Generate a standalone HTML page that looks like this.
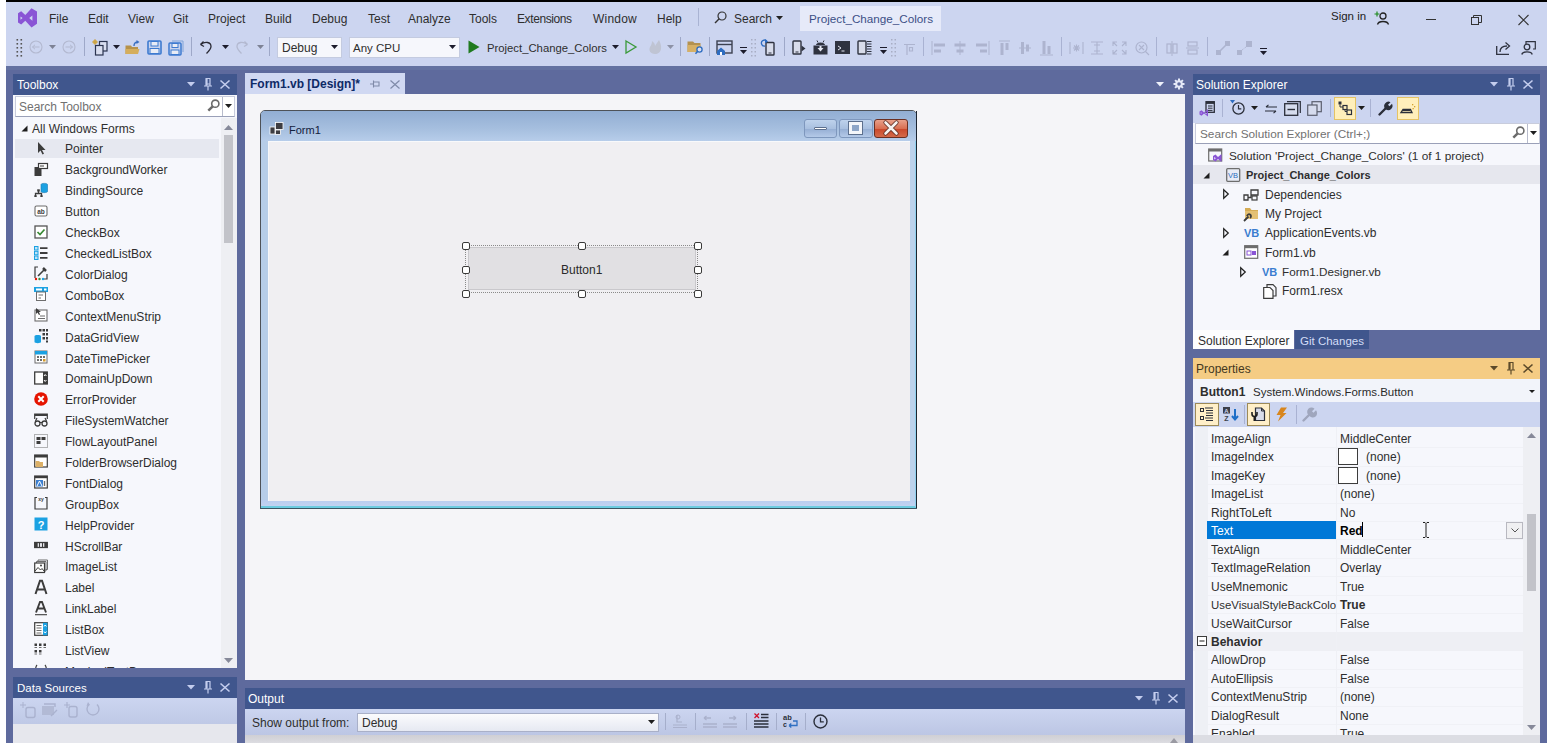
<!DOCTYPE html>
<html><head><meta charset="utf-8">
<style>
*{box-sizing:border-box;margin:0;padding:0}
html,body{width:1556px;height:743px;overflow:hidden;background:#fff}
body{position:relative;font-family:"Liberation Sans",sans-serif;font-size:12px;color:#2e2e2e}
.a{position:absolute}
.t{position:absolute;white-space:nowrap;line-height:14px}
svg{position:absolute;overflow:visible}
</style></head><body>
<!-- top black bar -->
<div class="a" style="left:6px;top:0;width:1541px;height:2px;background:#000"></div>
<!-- menu/toolbar bg -->
<div class="a" style="left:6px;top:2px;width:1541px;height:64px;background:#ccd5f0"></div>
<!-- frame -->
<div class="a" style="left:6px;top:66px;width:1541px;height:677px;background:#5e6a9d"></div>
<div class="a" style="left:6px;top:66px;width:1541px;height:4px;background:#6472a1"></div>

<!-- ===== MENU ===== -->
<svg style="left:0;top:0" width="40" height="30" viewBox="0 0 40 30"><path d="M18 13.2 L21.2 11.3 L25.3 15 L31.5 8.3 L37 11.5 V23.8 L31.5 27.6 L25.3 20.8 L21.2 24.6 L18 22.6 Z M20.5 16.5 V19.7 L22.6 18.1 Z M32.4 15.4 V20.8 L29.2 18.1 Z" fill="#8a55d5" fill-rule="evenodd"/></svg>
<div class="t" style="left:49px;top:12px">File</div>
<div class="t" style="left:88px;top:12px">Edit</div>
<div class="t" style="left:128px;top:12px">View</div>
<div class="t" style="left:173px;top:12px">Git</div>
<div class="t" style="left:208px;top:12px">Project</div>
<div class="t" style="left:265px;top:12px">Build</div>
<div class="t" style="left:312px;top:12px">Debug</div>
<div class="t" style="left:368px;top:12px">Test</div>
<div class="t" style="left:408px;top:12px">Analyze</div>
<div class="t" style="left:469px;top:12px">Tools</div>
<div class="t" style="left:517px;top:12px;letter-spacing:-0.4px">Extensions</div>
<div class="t" style="left:593px;top:12px;letter-spacing:0.2px">Window</div>
<div class="t" style="left:657px;top:12px">Help</div>
<div class="a" style="left:698px;top:8px;width:1px;height:18px;background:#a9b3d3"></div>
<svg style="left:714px;top:11px" width="13" height="13" viewBox="0 0 13 13"><circle cx="8" cy="5" r="4" fill="none" stroke="#333" stroke-width="1.2"/><path d="M5.2 7.8 L1 12" stroke="#333" stroke-width="1.4"/></svg>
<div class="t" style="left:734px;top:12px">Search</div>
<svg style="left:776px;top:16px" width="7" height="4"><path d="M0 0H7L3.5 4Z" fill="#222"/></svg>
<div class="a" style="left:800px;top:6px;width:141px;height:25px;background:#e6eaf9"></div>
<div class="t" style="left:809px;top:12px;color:#3b4f86;font-size:11.7px">Project_Change_Colors</div>
<div class="t" style="left:1331px;top:9px;color:#222;font-size:11.5px">Sign in</div>
<svg style="left:1375px;top:11px" width="14" height="14" viewBox="0 0 14 14"><path d="M2 0.5V5.5M-0.5 3H4.5" stroke="#1e8a1e" stroke-width="1.2"/><circle cx="8" cy="5" r="3" fill="none" stroke="#222" stroke-width="1.3"/><path d="M2.5 13.5C3.5 9.5 12.5 9.5 13.5 13.5" fill="none" stroke="#222" stroke-width="1.3"/></svg>
<div class="a" style="left:1426px;top:19px;width:10px;height:1px;background:#333"></div>
<svg style="left:1471px;top:15px" width="11" height="10" viewBox="0 0 11 10"><rect x="0.5" y="2.5" width="7" height="7" fill="none" stroke="#333"/><path d="M2.5 2.5V0.5H10.5V7.5H7.5" fill="none" stroke="#333"/></svg>
<svg style="left:1518px;top:15px" width="11" height="10" viewBox="0 0 11 10"><path d="M0.5 0L10.5 10M10.5 0L0.5 10" stroke="#333" stroke-width="1.1"/></svg>

<!-- ===== TOOLBAR ===== -->
<svg style="left:16px;top:38px" width="7" height="19"><g fill="#555"><rect x="0.5" y="1" width="1.6" height="1.6"/><rect x="4.5" y="1" width="1.6" height="1.6"/><rect x="0.5" y="5" width="1.6" height="1.6"/><rect x="4.5" y="5" width="1.6" height="1.6"/><rect x="0.5" y="9" width="1.6" height="1.6"/><rect x="4.5" y="9" width="1.6" height="1.6"/><rect x="0.5" y="13" width="1.6" height="1.6"/><rect x="4.5" y="13" width="1.6" height="1.6"/><rect x="0.5" y="17" width="1.6" height="1.6"/><rect x="4.5" y="17" width="1.6" height="1.6"/></g></svg>
<svg style="left:29px;top:40px" width="14" height="14"><circle cx="7" cy="7" r="6" fill="none" stroke="#b3b9d0" stroke-width="1.1"/><path d="M3.5 7H10.5M3.5 7L6 4.8M3.5 7L6 9.2" fill="none" stroke="#b3b9d0" stroke-width="1"/></svg>
<svg style="left:49px;top:45px" width="7" height="4"><path d="M0 0H7L3.5 4Z" fill="#7d8295"/></svg>
<svg style="left:62px;top:40px" width="14" height="14"><circle cx="7" cy="7" r="6" fill="none" stroke="#b3b9d0" stroke-width="1.1"/><path d="M3.5 7H10.5M10.5 7L8 4.8M10.5 7L8 9.2" fill="none" stroke="#b3b9d0" stroke-width="1"/></svg>
<div class="a" style="left:84px;top:37px;width:1px;height:19px;background:#9ea8c8"></div>
<svg style="left:92px;top:39px" width="17" height="17" viewBox="0 0 17 17"><circle cx="3" cy="3" r="2.2" fill="#d9b45a"/><path d="M3 0V6M0 3H6" stroke="#c19a3e" stroke-width="0.8"/><rect x="7.5" y="2.5" width="7.5" height="9.5" fill="#d9def0" stroke="#2b3450" stroke-width="1.2"/><rect x="3.5" y="6.5" width="7.5" height="9.5" fill="#d9def0" stroke="#2b3450" stroke-width="1.2"/></svg>
<svg style="left:113px;top:45px" width="7" height="4"><path d="M0 0H7L3.5 4Z" fill="#1c1c2c"/></svg>
<svg style="left:125px;top:40px" width="15" height="15" viewBox="0 0 15 15"><path d="M0.5 5.5H6L7 7H13V14H0.5Z" fill="#b6924a"/><path d="M0.5 9H14.5L13 14H0.5Z" fill="#d5ae5d"/><path d="M9 6C9 3.5 10.5 2 13 2" fill="none" stroke="#3a6fc0" stroke-width="1.4"/><path d="M11.5 0L14.5 2L11.5 4Z" fill="#3a6fc0"/></svg>
<svg style="left:147px;top:40px" width="15" height="15" viewBox="0 0 15 15"><rect x="1" y="1" width="13" height="13" rx="1" fill="#c9d4ee" stroke="#3d7ad0" stroke-width="1.6"/><rect x="4" y="1.5" width="7" height="4.5" fill="#e8ecf6" stroke="#3d7ad0" stroke-width="1"/><rect x="3" y="8.5" width="9" height="5" fill="#e8ecf6" stroke="#3d7ad0" stroke-width="1"/></svg>
<svg style="left:168px;top:40px" width="16" height="16" viewBox="0 0 16 16"><path d="M4 1H15V12" fill="none" stroke="#7fa3d8" stroke-width="1"/><rect x="1" y="3" width="12" height="12" rx="1" fill="#c9d4ee" stroke="#3d7ad0" stroke-width="1.5"/><rect x="4" y="3.5" width="6" height="4" fill="#e8ecf6" stroke="#3d7ad0" stroke-width="1"/><rect x="3" y="10" width="8" height="4.5" fill="#e8ecf6" stroke="#3d7ad0" stroke-width="1"/></svg>
<div class="a" style="left:191px;top:37px;width:1px;height:19px;background:#9ea8c8"></div>
<svg style="left:199px;top:40px" width="14" height="14" viewBox="0 0 14 14"><path d="M1.5 4.5L4.5 1.5M1.5 4.5L5 6.5" fill="none" stroke="#2a2a35" stroke-width="1.3"/><path d="M1.8 4.5C6 1 12 2 12 6.5C12 9 10 11 7.5 13.5" fill="none" stroke="#2a2a35" stroke-width="1.3"/></svg>
<svg style="left:222px;top:45px" width="7" height="4"><path d="M0 0H7L3.5 4Z" fill="#1c1c2c"/></svg>
<svg style="left:235px;top:40px" width="14" height="14" viewBox="0 0 14 14"><path d="M12.5 4.5L9.5 1.5M12.5 4.5L9 6.5" fill="none" stroke="#b3b9d0" stroke-width="1.3"/><path d="M12.2 4.5C8 1 2 2 2 6.5C2 9 4 11 6.5 13.5" fill="none" stroke="#b3b9d0" stroke-width="1.3"/></svg>
<svg style="left:257px;top:45px" width="7" height="4"><path d="M0 0H7L3.5 4Z" fill="#7d8295"/></svg>
<div class="a" style="left:269px;top:37px;width:1px;height:19px;background:#9ea8c8"></div>
<div class="a" style="left:277px;top:37px;width:65px;height:21px;background:#f6f7fc;border:1px solid #c4cbe0"></div>
<div class="t" style="left:282px;top:41px">Debug</div>
<svg style="left:331px;top:45px" width="7" height="4"><path d="M0 0H7L3.5 4Z" fill="#1c1c2c"/></svg>
<div class="a" style="left:349px;top:37px;width:111px;height:21px;background:#f6f7fc;border:1px solid #c4cbe0"></div>
<div class="t" style="left:353px;top:41px;font-size:11.5px">Any CPU</div>
<svg style="left:449px;top:45px" width="7" height="4"><path d="M0 0H7L3.5 4Z" fill="#1c1c2c"/></svg>
<svg style="left:468px;top:40px" width="12" height="14"><path d="M0.5 0.5L11.5 7L0.5 13.5Z" fill="#1f7a1f"/></svg>
<div class="t" style="left:487px;top:41px;font-size:11.3px">Project_Change_Colors</div>
<svg style="left:612px;top:45px" width="7" height="4"><path d="M0 0H7L3.5 4Z" fill="#1c1c2c"/></svg>
<svg style="left:625px;top:40px" width="12" height="14"><path d="M1 1L11 7L1 13Z" fill="none" stroke="#3a9a3a" stroke-width="1.3"/></svg>
<svg style="left:648px;top:39px" width="14" height="16" viewBox="0 0 14 16"><path d="M7 15C2 15 0.5 11 2 8C3 6 4 5 4 2C6 3.5 7 5 7 7C8 5.5 9 4 11 1C12.5 4 13.5 7 13 10C12.5 13 10 15 7 15Z" fill="#bfc4d3"/></svg>
<svg style="left:667px;top:45px" width="7" height="4"><path d="M0 0H7L3.5 4Z" fill="#8d92a6"/></svg>
<div class="a" style="left:680px;top:37px;width:1px;height:19px;background:#9ea8c8"></div>
<svg style="left:687px;top:40px" width="17" height="15" viewBox="0 0 17 15"><path d="M0.5 1.5H6L7.5 3H13.5V12H0.5Z" fill="#b39150"/><path d="M0.5 5H13.5V12H0.5Z" fill="#d6b066"/><circle cx="12.5" cy="9.5" r="2.6" fill="#d8def2" stroke="#2d6cc0" stroke-width="1.3"/><path d="M10.7 11.3L8.5 13.8" stroke="#2d6cc0" stroke-width="1.5"/></svg>
<div class="a" style="left:709px;top:37px;width:1px;height:19px;background:#9ea8c8"></div>
<svg style="left:716px;top:40px" width="17" height="15" viewBox="0 0 17 15"><rect x="1" y="1" width="15" height="12" fill="none" stroke="#3c4150" stroke-width="1.4"/><path d="M1 4.5H16" stroke="#3c4150" stroke-width="1.4"/><path d="M1 11L5 7.5L9 11V15H1Z" fill="#2d6cc0"/><rect x="4" y="12" width="2" height="3" fill="#fff"/></svg>
<svg style="left:740px;top:47px" width="7" height="8"><path d="M0 0H7V1H0Z M0 3H7L3.5 7Z" fill="#1c1c2c"/></svg>
<svg style="left:751px;top:38px" width="6" height="19"><g fill="#a8aec4"><rect x="0" y="1" width="1.5" height="1.5"/><rect x="3.5" y="1" width="1.5" height="1.5"/><rect x="0" y="5" width="1.5" height="1.5"/><rect x="3.5" y="5" width="1.5" height="1.5"/><rect x="0" y="9" width="1.5" height="1.5"/><rect x="3.5" y="9" width="1.5" height="1.5"/><rect x="0" y="13" width="1.5" height="1.5"/><rect x="3.5" y="13" width="1.5" height="1.5"/><rect x="0" y="17" width="1.5" height="1.5"/><rect x="3.5" y="17" width="1.5" height="1.5"/></g></svg>
<svg style="left:761px;top:39px" width="14" height="17" viewBox="0 0 14 17"><rect x="5" y="3.5" width="8" height="12.5" rx="0.8" fill="#d8dcea" stroke="#2f3340" stroke-width="1.4"/><path d="M7.5 14H10.5" stroke="#2f3340"/><path d="M6 2.5A3 3 0 1 0 4 7" fill="none" stroke="#2d6cc0" stroke-width="1.3"/><path d="M4 0L7 2.5L4 4.5Z" fill="#2d6cc0"/></svg>
<div class="a" style="left:784px;top:37px;width:1px;height:19px;background:#9ea8c8"></div>
<svg style="left:792px;top:40px" width="14" height="15" viewBox="0 0 14 15"><rect x="1" y="1" width="8" height="13" rx="0.8" fill="#d8dcea" stroke="#2f3340" stroke-width="1.4"/><path d="M3.5 12H6.5" stroke="#2f3340"/><path d="M9.5 5.5L13.5 8.5L9.5 11.5Z" fill="#2f3340"/></svg>
<svg style="left:813px;top:39px" width="15" height="16" viewBox="0 0 15 16"><path d="M3 6C3 2.5 12 2.5 12 6Z" fill="#2f3340"/><path d="M4 1.5L5 3.5M11 1.5L10 3.5" stroke="#2f3340"/><rect x="0.5" y="6.5" width="14" height="9" fill="#2f3340"/><path d="M4.5 9H10.5L7.5 12.5Z" fill="#e5e8f3"/><path d="M6.5 7V9.5H8.5V7" fill="#e5e8f3"/></svg>
<svg style="left:835px;top:41px" width="15" height="13" viewBox="0 0 15 13"><rect x="0" y="0" width="15" height="13" fill="#2f3340"/><path d="M3 5L6 7L3 9" fill="none" stroke="#e5e8f3" stroke-width="1"/><path d="M6.5 10H9.5" stroke="#e5e8f3"/></svg>
<svg style="left:857px;top:40px" width="15" height="15" viewBox="0 0 15 15"><rect x="1" y="1" width="8" height="13" rx="0.8" fill="#d8dcea" stroke="#2f3340" stroke-width="1.4"/><path d="M10 1.5H14.5M10 4H14.5M10 6.5H14.5M10 9H14.5M10 11.5H14.5M10 14H14.5" stroke="#2f3340" stroke-width="1"/></svg>
<svg style="left:880px;top:47px" width="7" height="8"><path d="M0 0H7V1H0Z M0 3H7L3.5 7Z" fill="#1c1c2c"/></svg>
<svg style="left:891px;top:38px" width="6" height="19"><g fill="#a8aec4"><rect x="0" y="1" width="1.5" height="1.5"/><rect x="3.5" y="1" width="1.5" height="1.5"/><rect x="0" y="5" width="1.5" height="1.5"/><rect x="3.5" y="5" width="1.5" height="1.5"/><rect x="0" y="9" width="1.5" height="1.5"/><rect x="3.5" y="9" width="1.5" height="1.5"/><rect x="0" y="13" width="1.5" height="1.5"/><rect x="3.5" y="13" width="1.5" height="1.5"/><rect x="0" y="17" width="1.5" height="1.5"/><rect x="3.5" y="17" width="1.5" height="1.5"/></g></svg>

<svg style="left:904px;top:41px" width="11" height="15" viewBox="0 0 11 15"><path d="M0 3.5H11M3 3.5V14M5.5 6.5H8.5V10H5.5Z" fill="none" stroke="#adb4cf" stroke-width="1.2"/></svg>
<div class="a" style="left:923px;top:37px;width:1px;height:19px;background:#a9b2d2"></div>
<svg style="left:931px;top:41px" width="15" height="14" viewBox="0 0 15 14"><path d="M1 0V14" stroke="#adb4cf"/><rect x="3" y="2.5" width="11" height="3" fill="#adb4cf"/><rect x="3" y="8.5" width="7" height="3" fill="#adb4cf"/></svg>
<svg style="left:954px;top:41px" width="12" height="14" viewBox="0 0 12 14"><path d="M6 0V14" stroke="#adb4cf"/><rect x="0.5" y="2.5" width="11" height="3" fill="#adb4cf"/><rect x="2.5" y="8.5" width="7" height="3" fill="#adb4cf"/></svg>
<svg style="left:975px;top:41px" width="15" height="14" viewBox="0 0 15 14"><path d="M14 0V14" stroke="#adb4cf"/><rect x="1" y="2.5" width="11" height="3" fill="#adb4cf"/><rect x="5" y="8.5" width="7" height="3" fill="#adb4cf"/></svg>
<svg style="left:999px;top:40px" width="11" height="16" viewBox="0 0 11 16"><path d="M0 1H11" stroke="#adb4cf"/><rect x="1.5" y="3" width="3" height="12" fill="#adb4cf"/><rect x="6.5" y="3" width="3" height="7" fill="#adb4cf"/></svg>
<svg style="left:1019px;top:41px" width="12" height="14" viewBox="0 0 12 14"><path d="M0 7H12" stroke="#adb4cf"/><rect x="2" y="1" width="3" height="12" fill="#adb4cf"/><rect x="7" y="3.5" width="3" height="7" fill="#adb4cf"/></svg>
<svg style="left:1040px;top:40px" width="13" height="16" viewBox="0 0 13 16"><path d="M0 15H13" stroke="#adb4cf"/><rect x="2.5" y="1" width="3" height="13" fill="#adb4cf"/><rect x="7.5" y="6" width="3" height="8" fill="#adb4cf"/></svg>
<div class="a" style="left:1061px;top:37px;width:1px;height:19px;background:#a9b2d2"></div>
<svg style="left:1069px;top:41px" width="15" height="14" viewBox="0 0 15 14"><path d="M1 1V13M14 1V13M4 7H11M7.5 3.5V10.5M5 4.5L10 9.5M10 4.5L5 9.5" stroke="#adb4cf" stroke-width="1.1"/></svg>
<svg style="left:1090px;top:41px" width="14" height="14" viewBox="0 0 14 14"><path d="M1 1H13M1 13H13M7 1V13M4 4H10M4 10H10" stroke="#adb4cf" stroke-width="1.1"/></svg>
<svg style="left:1112px;top:41px" width="15" height="14" viewBox="0 0 15 14"><path d="M1 5V1H5M10 1H14V5M14 9V13H10M5 13H1V9M1 1L5 5M14 1L10 5M14 13L10 9M1 13L5 9" fill="none" stroke="#adb4cf" stroke-width="1.1"/></svg>
<svg style="left:1135px;top:41px" width="15" height="15" viewBox="0 0 15 15"><circle cx="6.5" cy="6.5" r="5.5" fill="none" stroke="#adb4cf" stroke-width="1.2"/><path d="M10.5 10.5L14 14M4 4L9 9M9 4L4 9" stroke="#adb4cf" stroke-width="1.1"/></svg>
<div class="a" style="left:1156px;top:37px;width:1px;height:19px;background:#a9b2d2"></div>
<svg style="left:1166px;top:41px" width="12" height="15" viewBox="0 0 12 15"><path d="M6 0V15" stroke="#adb4cf"/><rect x="1" y="3" width="4" height="9" fill="none" stroke="#adb4cf" stroke-width="1.2"/><rect x="7" y="3" width="4" height="9" fill="none" stroke="#adb4cf" stroke-width="1.2"/></svg>
<svg style="left:1186px;top:41px" width="13" height="14" viewBox="0 0 13 14"><path d="M0 7H13" stroke="#adb4cf"/><rect x="2" y="1" width="9" height="4" fill="none" stroke="#adb4cf" stroke-width="1.2"/><rect x="2" y="9" width="9" height="4" fill="none" stroke="#adb4cf" stroke-width="1.2"/></svg>
<div class="a" style="left:1207px;top:37px;width:1px;height:19px;background:#a9b2d2"></div>
<svg style="left:1216px;top:41px" width="14" height="14" viewBox="0 0 14 14"><rect x="0" y="9" width="5" height="5" fill="#adb4cf"/><rect x="9" y="0" width="5" height="5" fill="#adb4cf"/><path d="M4 10L10 4" stroke="#adb4cf" stroke-width="1.6"/></svg>
<svg style="left:1237px;top:41px" width="15" height="14" viewBox="0 0 15 14"><rect x="0" y="9" width="5" height="5" fill="#adb4cf"/><rect x="9" y="0" width="6" height="6" fill="#adb4cf"/><path d="M5 9L9 6" stroke="#adb4cf" stroke-width="1" stroke-dasharray="1 1"/></svg>
<svg style="left:1260px;top:48px" width="7" height="8"><path d="M0 0H7V1H0Z M0 3H7L3.5 7Z" fill="#1c1c2c"/></svg>
<svg style="left:1496px;top:41px" width="15" height="14" viewBox="0 0 15 14"><path d="M0.7 5V13.3H13" fill="none" stroke="#2f3340" stroke-width="1.3"/><path d="M4 11C4 7 7 5 11 5" fill="none" stroke="#2f3340" stroke-width="1.3"/><path d="M9.5 1.5L13.5 5L9.5 8.5" fill="none" stroke="#2f3340" stroke-width="1.3"/></svg>
<svg style="left:1521px;top:41px" width="15" height="14" viewBox="0 0 15 14"><path d="M5 3V0.7H14.3V8H12" fill="none" stroke="#2f3340" stroke-width="1.2"/><circle cx="6" cy="6" r="2.8" fill="#ccd5f0" stroke="#2f3340" stroke-width="1.3"/><path d="M0.8 13.5C1.5 10 10.5 10 11.2 13.5" fill="none" stroke="#2f3340" stroke-width="1.3"/></svg>
<!-- TOOLBOX -->
<div class="a" style="left:13px;top:74px;width:224px;height:21px;background:#40568d"></div>
<div class="a" style="left:13px;top:95px;width:224px;height:573px;background:#f6f7fc"></div>

<!--TBSTART--><div class="t" style="left:17px;top:78px;color:#fff">Toolbox</div><svg style="left:187px;top:82px" width="8" height="5"><path d="M0 0H8L4 4.5Z" fill="#c4cdee"/></svg><svg style="left:204px;top:78px" width="8" height="13" viewBox="0 0 8 13"><path d="M1.5 0.5H6.5M2 0.5V8M6 0.5V8M2 6H6M0 8H8M4 8V12.5" fill="none" stroke="#c4cdee" stroke-width="1.2"/><rect x="2" y="0.5" width="1.6" height="7" fill="#c4cdee"/></svg><svg style="left:220px;top:80px" width="10" height="9"><path d="M0.5 0.5L9.5 8.5M9.5 0.5L0.5 8.5" stroke="#c4cdee" stroke-width="1.6"/></svg><div class="a" style="left:13px;top:95px;width:224px;height:573px;overflow:hidden"><div class="a" style="left:-13px;top:-95px;width:1556px;height:743px"><div class="a" style="left:15px;top:96px;width:220px;height:21px;background:#fff;border:1px solid #c8ccdc;border-bottom-color:#9aa0b8"></div>
<div class="t" style="left:19px;top:100px;color:#717171">Search Toolbox</div>
<svg style="left:207px;top:99px" width="13" height="13" viewBox="0 0 13 13"><circle cx="8.3" cy="4.7" r="3.6" fill="none" stroke="#6b6b6b" stroke-width="1.6"/><path d="M5.7 7.3L1.3 11.7" stroke="#6b6b6b" stroke-width="2.5"/></svg>
<div class="a" style="left:222px;top:97px;width:1px;height:19px;background:#b8bccc"></div>
<svg style="left:225px;top:104px" width="7" height="4"><path d="M0 0H7L3.5 4Z" fill="#1e1e1e"/></svg>
<svg style="left:21px;top:125px" width="7" height="7"><path d="M6.5 0.5V6.5H0.5Z" fill="#1e1e1e"/></svg>
<div class="t" style="left:32px;top:122px">All Windows Forms</div>
<div class="a" style="left:15px;top:139px;width:204px;height:19px;background:#e6e8f0"></div>
<svg style="left:34px;top:141px" width="14" height="14" viewBox="0 0 14 14"><path d="M4 1V12L6.5 9.5L8.5 13.5L10 12.8L8 9H11.5Z" fill="#3c3c3c"/></svg>
<div class="t" style="left:65px;top:142px">Pointer</div>
<svg style="left:34px;top:162px" width="14" height="14" viewBox="0 0 14 14"><rect x="0.5" y="5" width="7" height="9" fill="#3c3c3c"/><rect x="4.5" y="1.5" width="9" height="5" fill="#fff" stroke="#3c3c3c" stroke-width="1.2"/><path d="M6 4H10" stroke="#3c3c3c"/></svg>
<div class="t" style="left:65px;top:163px">BackgroundWorker</div>
<svg style="left:34px;top:183px" width="14" height="14" viewBox="0 0 14 14"><path d="M7 1.5C7 0 13.5 0 13.5 1.5V8.5C13.5 10 7 10 7 8.5Z" fill="#1ba1e2" stroke="#1a78b0" stroke-width="0.6"/><path d="M1.5 13V10.5H7.5V13M4.5 8V10.5" fill="none" stroke="#3c3c3c" stroke-width="1.3"/><rect x="3.2" y="6.3" width="2.6" height="2.2" fill="#3c3c3c"/><rect x="0.3" y="12.3" width="2.4" height="1.7" fill="#3c3c3c"/><rect x="6.3" y="12.3" width="2.4" height="1.7" fill="#3c3c3c"/></svg>
<div class="t" style="left:65px;top:184px">BindingSource</div>
<svg style="left:34px;top:204px" width="14" height="14" viewBox="0 0 14 14"><rect x="1" y="2" width="12" height="10" rx="1.5" fill="#fff" stroke="#6d6d6d" stroke-width="1.1"/><text x="7" y="9.5" font-size="6.5" font-family="Liberation Sans" font-weight="bold" text-anchor="middle" fill="#3c3c3c">ab</text></svg>
<div class="t" style="left:65px;top:205px">Button</div>
<svg style="left:34px;top:225px" width="14" height="14" viewBox="0 0 14 14"><rect x="1" y="1" width="12" height="12" fill="#fff" stroke="#555" stroke-width="1.3"/><path d="M3.5 7L6 9.5L10.5 4.5" fill="none" stroke="#388a34" stroke-width="1.7"/></svg>
<div class="t" style="left:65px;top:226px">CheckBox</div>
<svg style="left:34px;top:246px" width="14" height="14" viewBox="0 0 14 14"><rect x="0.5" y="0.5" width="3.5" height="3.5" fill="#bfe3f7" stroke="#1ba1e2"/><rect x="0.5" y="5.3" width="3.5" height="3.5" fill="#bfe3f7" stroke="#1ba1e2"/><rect x="0.5" y="10" width="3.5" height="3.5" fill="#bfe3f7" stroke="#1ba1e2"/><path d="M6 2.2H13.5M6 7H13.5M6 11.8H13.5" stroke="#3c3c3c" stroke-width="1.8"/></svg>
<div class="t" style="left:65px;top:247px">CheckedListBox</div>
<svg style="left:34px;top:266px" width="14" height="14" viewBox="0 0 14 14"><path d="M4 1H1V12M10 13H13V8" fill="none" stroke="#3c3c3c" stroke-width="1.2"/><path d="M4 10L10 4" stroke="#3c3c3c" stroke-width="1.6"/><path d="M9 2L12 5" stroke="#3c3c3c" stroke-width="2.5"/><circle cx="2" cy="13" r="1.2" fill="#e51400"/><circle cx="5.5" cy="13" r="1.2" fill="#388a34"/><circle cx="9" cy="13" r="1.2" fill="#1ba1e2"/></svg>
<div class="t" style="left:65px;top:268px">ColorDialog</div>
<svg style="left:34px;top:287px" width="14" height="14" viewBox="0 0 14 14"><rect x="0" y="0" width="14" height="5" fill="#1ba1e2"/><rect x="2" y="1.5" width="6" height="2" fill="#fff"/><rect x="10" y="1.5" width="2.5" height="2" fill="#fff"/><rect x="2.5" y="5" width="9" height="8.5" fill="#fff" stroke="#6d6d6d"/><path d="M4.5 8H9M4.5 11H7" stroke="#6d6d6d"/></svg>
<div class="t" style="left:65px;top:289px">ComboBox</div>
<svg style="left:34px;top:308px" width="14" height="14" viewBox="0 0 14 14"><rect x="1" y="2" width="12" height="11" fill="#fff" stroke="#6d6d6d" stroke-width="1.1"/><path d="M2 0L2 6L3.5 4.5L5 7L6 6.5L5 4H7Z" fill="#3c3c3c"/><path d="M6 8H11M4 10.5H11" stroke="#6d6d6d"/></svg>
<div class="t" style="left:65px;top:310px">ContextMenuStrip</div>
<svg style="left:34px;top:329px" width="14" height="14" viewBox="0 0 14 14"><path d="M0.5 7C0.5 5.5 7 5.5 7 7V13C7 14.5 0.5 14.5 0.5 13Z" fill="#1ba1e2"/><g fill="#3c3c3c"><rect x="5" y="0" width="2.5" height="2.5"/><rect x="8.5" y="0" width="2.5" height="2.5"/><rect x="12" y="0" width="2" height="2.5"/><rect x="8.5" y="4" width="2.5" height="2.5"/><rect x="12" y="4" width="2" height="2.5"/><rect x="8.5" y="8" width="2.5" height="2.5"/><rect x="12" y="8" width="2" height="2.5"/><rect x="12" y="11.5" width="2" height="2"/></g></svg>
<div class="t" style="left:65px;top:331px">DataGridView</div>
<svg style="left:34px;top:350px" width="14" height="14" viewBox="0 0 14 14"><rect x="1" y="1" width="12" height="12" fill="#fff" stroke="#6d6d6d"/><rect x="1" y="1" width="12" height="3.5" fill="#1ba1e2"/><g fill="#6d6d6d"><rect x="3" y="6" width="2" height="2"/><rect x="6" y="6" width="2" height="2"/><rect x="9" y="6" width="2" height="2"/><rect x="3" y="9" width="2" height="2"/><rect x="6" y="9" width="2" height="2"/></g><rect x="9" y="9" width="2.5" height="2.5" fill="#d49a2a"/></svg>
<div class="t" style="left:65px;top:352px">DateTimePicker</div>
<svg style="left:34px;top:371px" width="14" height="14" viewBox="0 0 14 14"><rect x="0.7" y="1" width="12.6" height="12" fill="#fff" stroke="#3c3c3c" stroke-width="1.3"/><rect x="9" y="1" width="4.5" height="12" fill="#3c3c3c"/><path d="M10 5L11.2 3.5L12.4 5M10 9L11.2 10.5L12.4 9" stroke="#fff" fill="none"/></svg>
<div class="t" style="left:65px;top:372px">DomainUpDown</div>
<svg style="left:34px;top:392px" width="14" height="14" viewBox="0 0 14 14"><circle cx="7" cy="7" r="6.8" fill="#e51400"/><path d="M4.3 4.3L9.7 9.7M9.7 4.3L4.3 9.7" stroke="#fff" stroke-width="2"/></svg>
<div class="t" style="left:65px;top:393px">ErrorProvider</div>
<svg style="left:34px;top:413px" width="14" height="14" viewBox="0 0 14 14"><path d="M0.7 6V1H13.3V6" fill="none" stroke="#3c3c3c" stroke-width="1.2"/><rect x="0.7" y="1" width="12.6" height="2" fill="#3c3c3c"/><circle cx="3.5" cy="10.5" r="2.5" fill="none" stroke="#3c3c3c" stroke-width="1.3"/><circle cx="10.5" cy="10.5" r="2.5" fill="none" stroke="#3c3c3c" stroke-width="1.3"/><path d="M6 9.5H8M1.5 8L3 5M12.5 8L11 5" stroke="#3c3c3c" stroke-width="1.2"/></svg>
<div class="t" style="left:65px;top:414px">FileSystemWatcher</div>
<svg style="left:34px;top:434px" width="14" height="14" viewBox="0 0 14 14"><rect x="0.5" y="0.5" width="13" height="13" fill="none" stroke="#6d6d6d" stroke-dasharray="1 1"/><rect x="2.5" y="3" width="4" height="3" fill="#3c3c3c"/><rect x="7.5" y="3" width="4" height="3" fill="#3c3c3c"/><rect x="2.5" y="7" width="4" height="3" fill="#3c3c3c"/></svg>
<div class="t" style="left:65px;top:435px">FlowLayoutPanel</div>
<svg style="left:34px;top:454px" width="14" height="14" viewBox="0 0 14 14"><rect x="0.7" y="1" width="12.6" height="12" fill="#fff" stroke="#3c3c3c" stroke-width="1.2"/><rect x="0.7" y="1" width="12.6" height="2.5" fill="#3c3c3c"/><path d="M1.5 7H5L6 8H9V13H1.5Z" fill="#dcb067"/></svg>
<div class="t" style="left:65px;top:456px">FolderBrowserDialog</div>
<svg style="left:34px;top:475px" width="14" height="14" viewBox="0 0 14 14"><rect x="0.7" y="1" width="12.6" height="12" fill="#fff" stroke="#3c3c3c" stroke-width="1.2"/><rect x="0.7" y="1" width="12.6" height="2.2" fill="#3c3c3c"/><rect x="2" y="5" width="7" height="6.5" fill="#3c7fd0"/><path d="M3 11L5.5 6L8 11" fill="none" stroke="#fff" stroke-width="1"/><path d="M10.5 6V11" stroke="#6d6d6d" stroke-width="1.4"/></svg>
<div class="t" style="left:65px;top:477px">FontDialog</div>
<svg style="left:34px;top:496px" width="14" height="14" viewBox="0 0 14 14"><path d="M3 1.5H1V13H13V1.5H11" fill="none" stroke="#3c3c3c" stroke-width="1.2"/><text x="7" y="5" font-size="5" font-family="Liberation Sans" font-weight="bold" text-anchor="middle" fill="#3c3c3c">xy</text></svg>
<div class="t" style="left:65px;top:498px">GroupBox</div>
<svg style="left:34px;top:517px" width="14" height="14" viewBox="0 0 14 14"><rect x="0.5" y="0.5" width="13" height="13" fill="#1ba1e2"/><text x="7" y="11.5" font-size="11" font-family="Liberation Sans" font-weight="bold" text-anchor="middle" fill="#fff">?</text></svg>
<div class="t" style="left:65px;top:519px">HelpProvider</div>
<svg style="left:34px;top:538px" width="14" height="14" viewBox="0 0 14 14"><rect x="0.7" y="4.5" width="12.6" height="5" fill="none" stroke="#3c3c3c" stroke-width="1.3"/><rect x="0.7" y="4.5" width="3" height="5" fill="#3c3c3c"/><rect x="10.3" y="4.5" width="3" height="5" fill="#3c3c3c"/><path d="M5.5 4.5V9.5M8.5 4.5V9.5" stroke="#3c3c3c" stroke-width="1.2"/></svg>
<div class="t" style="left:65px;top:540px">HScrollBar</div>
<svg style="left:34px;top:559px" width="14" height="14" viewBox="0 0 14 14"><path d="M4 3V1H13.5V10.5H11.5M2.5 4.5V2.5H12V12H10" fill="none" stroke="#6d6d6d" stroke-width="1"/><rect x="0.7" y="4" width="9.8" height="9.5" fill="#fff" stroke="#3c3c3c" stroke-width="1.2"/><path d="M1 12L4 8.5L6.5 11L8 9.5L10 12" fill="none" stroke="#3c3c3c"/><circle cx="7" cy="6.5" r="1" fill="#3c3c3c"/></svg>
<div class="t" style="left:65px;top:560px">ImageList</div>
<svg style="left:34px;top:580px" width="14" height="14" viewBox="0 0 14 14"><path d="M1.5 14L6 0.8H8L12.5 14M3.5 9.5H10.5" fill="none" stroke="#3c3c3c" stroke-width="2"/></svg>
<div class="t" style="left:65px;top:581px">Label</div>
<svg style="left:34px;top:601px" width="14" height="14" viewBox="0 0 14 14"><path d="M2 11.5L6 1H8L12 11.5M3.8 7.5H10.2" fill="none" stroke="#3c3c3c" stroke-width="1.9"/><path d="M1 13.7H13" stroke="#3c3c3c" stroke-width="1.1"/></svg>
<div class="t" style="left:65px;top:602px">LinkLabel</div>
<svg style="left:34px;top:622px" width="14" height="14" viewBox="0 0 14 14"><rect x="0.7" y="0.7" width="12.6" height="12.6" fill="#fff" stroke="#3c3c3c" stroke-width="1.2"/><rect x="9" y="0.7" width="4.5" height="12.6" fill="#1ba1e2"/><path d="M2.5 3.5H7.5M2.5 6H7.5M2.5 8.5H7.5M2.5 11H7.5" stroke="#6d6d6d" stroke-width="1.2"/><path d="M10 4.5L11.2 3L12.4 4.5M10 9.5L11.2 11L12.4 9.5" stroke="#fff" fill="none"/></svg>
<div class="t" style="left:65px;top:623px">ListBox</div>
<svg style="left:34px;top:643px" width="14" height="14" viewBox="0 0 14 14"><g fill="#3c3c3c"><rect x="0.5" y="0.5" width="2.5" height="2.5"/><rect x="5" y="0.5" width="2.5" height="2.5"/><rect x="9.5" y="0.5" width="2.5" height="2.5"/><rect x="0.5" y="7" width="2.5" height="2.5"/><rect x="5" y="7" width="2.5" height="2.5"/></g><g fill="#6d6d6d"><rect x="0.5" y="4" width="2.5" height="1"/><rect x="5" y="4" width="2.5" height="1"/><rect x="9.5" y="4" width="2.5" height="1"/><rect x="0.5" y="10.5" width="2.5" height="1"/><rect x="5" y="10.5" width="2.5" height="1"/></g></svg>
<div class="t" style="left:65px;top:644px">ListView</div>
<svg style="left:34px;top:664px" width="14" height="14" viewBox="0 0 14 14"><path d="M3 1C1 3 1 11 3 13M11 1C13 3 13 11 11 13" fill="none" stroke="#3c3c3c" stroke-width="1.2"/></svg>
<div class="t" style="left:65px;top:665px">MaskedTextBox</div>
<div class="a" style="left:221px;top:118px;width:16px;height:550px;background:#eeeff3"></div>
<svg style="left:224px;top:125px" width="9" height="5"><path d="M0 5H9L4.5 0Z" fill="#868999"/></svg>
<div class="a" style="left:224px;top:135px;width:9px;height:108px;background:#c2c3c9"></div>
<svg style="left:224px;top:658px" width="9" height="5"><path d="M0 0H9L4.5 5Z" fill="#868999"/></svg></div></div><!--TBEND-->
<!-- DATA SOURCES -->
<div class="a" style="left:13px;top:677px;width:224px;height:21px;background:#40568d"></div>
<div class="a" style="left:13px;top:698px;width:224px;height:26px;background:#ccd5f0"></div>
<div class="a" style="left:13px;top:724px;width:224px;height:19px;background:#e6e7ed"></div>

<!-- DOC TAB + DESIGNER -->
<div class="a" style="left:245px;top:73px;width:160px;height:21px;background:#d0d8f2"></div>
<div class="a" style="left:245px;top:94px;width:940px;height:586px;background:#f5f5f8"></div>

<!-- OUTPUT -->
<div class="a" style="left:245px;top:688px;width:940px;height:21px;background:#40568d"></div>
<div class="a" style="left:245px;top:709px;width:940px;height:26px;background:linear-gradient(#ccd5f0,#bcc6e4)"></div>
<div class="a" style="left:245px;top:735px;width:940px;height:8px;background:linear-gradient(#cfcfd4,#dcdce1)"></div>

<!--CENTERSTART-->
<!-- Data Sources -->
<div class="t" style="left:17px;top:681px;color:#fff;font-size:11.5px">Data Sources</div>
<svg style="left:187px;top:685px" width="8" height="5"><path d="M0 0H8L4 4.5Z" fill="#c4cdee"/></svg>
<svg style="left:204px;top:681px" width="8" height="13" viewBox="0 0 8 13"><path d="M1.5 0.5H6.5M2 0.5V8M6 0.5V8M0 8H8M4 8V12.5" fill="none" stroke="#c4cdee" stroke-width="1.2"/><rect x="2" y="0.5" width="1.6" height="7" fill="#c4cdee"/></svg>
<svg style="left:220px;top:683px" width="10" height="9"><path d="M0.5 0.5L9.5 8.5M9.5 0.5L0.5 8.5" stroke="#c4cdee" stroke-width="1.6"/></svg>
<div class="a" style="left:13px;top:698px;width:224px;height:26px;background:linear-gradient(#ccd5f0,#bfc9e6)"></div>
<svg style="left:20px;top:702px" width="16" height="16" viewBox="0 0 16 16"><path d="M3 0V6M0 3H6" stroke="#aab2cf" stroke-width="1"/><rect x="6" y="5.5" width="9" height="10" rx="2" fill="none" stroke="#aab2cf" stroke-width="1.4"/></svg>
<svg style="left:41px;top:703px" width="17" height="15" viewBox="0 0 17 15"><rect x="1" y="3" width="12" height="9" fill="#b2bad5"/><path d="M3 1H14V4M10 13L16 7" stroke="#aab2cf" stroke-width="1.4" fill="none"/></svg>
<svg style="left:64px;top:702px" width="14" height="16" viewBox="0 0 14 16"><path d="M3 0V6M0 3H6" stroke="#aab2cf" stroke-width="1.2"/><rect x="5" y="4.5" width="8" height="10.5" rx="2" fill="none" stroke="#aab2cf" stroke-width="1.4"/></svg>
<svg style="left:85px;top:702px" width="16" height="16" viewBox="0 0 16 16"><path d="M4 2.5A6 6 0 1 0 12 2.5" fill="none" stroke="#aab2cf" stroke-width="1.4"/><path d="M3 0L5 3L1.5 4Z" fill="#aab2cf"/></svg>

<!-- Doc tab -->
<div class="t" style="left:250px;top:77px;color:#0e2a66;font-weight:bold">Form1.vb [Design]*</div>
<svg style="left:370px;top:80px" width="10" height="8" viewBox="0 0 10 8"><path d="M0 4H3.5M3.5 0.5V7.5M3.5 2H9M3.5 6H9M9 1.5V6.5" fill="none" stroke="#7f8aa8" stroke-width="1.1"/></svg>
<svg style="left:390px;top:80px" width="10" height="9"><path d="M0.5 0.5L9.5 8.5M9.5 0.5L0.5 8.5" stroke="#7f8aa8" stroke-width="1.2"/></svg>
<svg style="left:1156px;top:82px" width="8" height="5"><path d="M0 0H8L4 4.5Z" fill="#eef1fb"/></svg>
<svg style="left:1173px;top:78px" width="12" height="12" viewBox="0 0 12 12"><g fill="#e6eaf8"><circle cx="6" cy="6" r="3.8"/><rect x="5" y="0.5" width="2" height="11"/><rect x="0.5" y="5" width="11" height="2"/><rect x="5" y="0.5" width="2" height="11" transform="rotate(45 6 6)"/><rect x="5" y="0.5" width="2" height="11" transform="rotate(-45 6 6)"/></g><circle cx="6" cy="6" r="1.8" fill="#5e6a9d"/></svg>

<!-- Form window -->
<div class="a" style="left:260px;top:110px;width:657px;height:399px;border:1px solid #4e5258;border-radius:5px 5px 0 0;background:linear-gradient(90deg,#b6cde8,#bcd2ec)"></div>
<div class="a" style="left:261px;top:111px;width:655px;height:30px;border-radius:4px 4px 0 0;background:linear-gradient(#92aed3,#a6bfdf 60%,#b7cdea)"></div>
<div class="a" style="left:261px;top:500px;width:655px;height:7px;background:linear-gradient(#b9cdef,#c3d3f2)"></div>
<div class="a" style="left:261px;top:506px;width:655px;height:2px;background:#6ccbe0"></div>
<div class="a" style="left:916px;top:111px;width:1px;height:398px;background:#1c2430"></div>
<div class="a" style="left:915px;top:141px;width:1px;height:366px;background:#8fd0ee"></div>
<div class="a" style="left:909px;top:141px;width:1px;height:360px;background:#f7f5f2"></div>
<div class="a" style="left:260px;top:508px;width:657px;height:1px;background:#3b5563"></div>
<div class="a" style="left:268px;top:141px;width:642px;height:360px;background:#f0eff2;border-left:1px solid #f6f7f9;border-top:1px solid #f8f9fb"></div>
<svg style="left:270px;top:122px" width="14" height="13" viewBox="0 0 14 13"><rect x="0" y="5" width="5" height="7" fill="#3d3d42" stroke="#fff" stroke-width="0.8"/><rect x="5.5" y="0.5" width="7.5" height="7" fill="#3d3d42" stroke="#fff" stroke-width="0.8"/><rect x="5.5" y="8" width="5" height="4.5" fill="#3d3d42" stroke="#fff" stroke-width="0.8"/></svg>
<div class="t" style="left:289px;top:123px;font-size:11px;color:#13213d">Form1</div>
<!-- caption buttons -->
<div class="a" style="left:804px;top:119px;width:33px;height:19px;border:1px solid #7e97bd;border-radius:3px;background:linear-gradient(#bed2ec,#a9c0e0 50%,#94add3 51%,#b4c9e8)"></div>
<div class="a" style="left:814px;top:127px;width:13px;height:3px;background:#fff;border:1px solid #5d708e;border-radius:1px"></div>
<div class="a" style="left:839px;top:119px;width:34px;height:19px;border:1px solid #7e97bd;border-radius:3px;background:linear-gradient(#bed2ec,#a9c0e0 50%,#94add3 51%,#b4c9e8)"></div>
<div class="a" style="left:849px;top:122px;width:13px;height:12px;border:3px solid #f4f6fa;outline:1px solid #5d708e;background:#8ea6c8"></div>
<div class="a" style="left:874px;top:119px;width:34px;height:19px;border:1px solid #6b2f22;border-radius:3px;background:linear-gradient(#e8a08a,#d96f52 50%,#c9472a 51%,#d46a4a)"></div>
<svg style="left:883px;top:121px" width="16" height="14" viewBox="0 0 16 14"><path d="M2.5 1.5L13.5 12.5M13.5 1.5L2.5 12.5" stroke="#5b2a20" stroke-width="4.2" stroke-linecap="round"/><path d="M2.5 1.5L13.5 12.5M13.5 1.5L2.5 12.5" stroke="#f6f2f0" stroke-width="2.6" stroke-linecap="round"/></svg>

<!-- Button1 with selection -->
<div class="a" style="left:468px;top:247px;width:228px;height:43px;background:#e1e0e3;border:1px solid #c9c8cc"></div>
<div class="t" style="left:561px;top:263px;color:#2a2a2a">Button1</div>
<div class="a" style="left:465px;top:245px;width:233px;height:48px;border:1px dotted #8a8a8a"></div>
<div class="a" style="left:462px;top:242px;width:8px;height:8px;background:#fff;border:1.5px solid #3a3a3a;border-radius:2px"></div>
<div class="a" style="left:462px;top:266px;width:8px;height:8px;background:#fff;border:1.5px solid #3a3a3a;border-radius:2px"></div>
<div class="a" style="left:462px;top:290px;width:8px;height:8px;background:#fff;border:1.5px solid #3a3a3a;border-radius:2px"></div>
<div class="a" style="left:578px;top:242px;width:8px;height:8px;background:#fff;border:1.5px solid #3a3a3a;border-radius:2px"></div>
<div class="a" style="left:578px;top:290px;width:8px;height:8px;background:#fff;border:1.5px solid #3a3a3a;border-radius:2px"></div>
<div class="a" style="left:694px;top:242px;width:8px;height:8px;background:#fff;border:1.5px solid #3a3a3a;border-radius:2px"></div>
<div class="a" style="left:694px;top:266px;width:8px;height:8px;background:#fff;border:1.5px solid #3a3a3a;border-radius:2px"></div>
<div class="a" style="left:694px;top:290px;width:8px;height:8px;background:#fff;border:1.5px solid #3a3a3a;border-radius:2px"></div>

<!-- Output -->
<div class="t" style="left:248px;top:692px;color:#fff">Output</div>
<svg style="left:1135px;top:696px" width="8" height="5"><path d="M0 0H8L4 4.5Z" fill="#c4cdee"/></svg>
<svg style="left:1152px;top:692px" width="8" height="13" viewBox="0 0 8 13"><path d="M1.5 0.5H6.5M2 0.5V8M6 0.5V8M0 8H8M4 8V12.5" fill="none" stroke="#c4cdee" stroke-width="1.2"/><rect x="2" y="0.5" width="1.6" height="7" fill="#c4cdee"/></svg>
<svg style="left:1168px;top:694px" width="10" height="9"><path d="M0.5 0.5L9.5 8.5M9.5 0.5L0.5 8.5" stroke="#c4cdee" stroke-width="1.6"/></svg>
<div class="t" style="left:252px;top:716px;color:#2e2e2e">Show output from:</div>
<div class="a" style="left:357px;top:713px;width:302px;height:19px;border:1px solid #a9b0c8;background:linear-gradient(#fbfbfd,#e6e9f2)"></div>
<div class="t" style="left:362px;top:716px;color:#2e2e2e">Debug</div>
<svg style="left:648px;top:720px" width="7" height="4"><path d="M0 0H7L3.5 4Z" fill="#1e1e1e"/></svg>
<div class="a" style="left:665px;top:713px;width:1px;height:17px;background:#a5aecb"></div>
<svg style="left:672px;top:714px" width="16" height="15" viewBox="0 0 16 15"><path d="M5 1V8H10M1 11H15M1 13.5H15" stroke="#aab1cc" stroke-width="1.2" fill="none"/><circle cx="6" cy="3" r="2" fill="none" stroke="#aab1cc"/></svg>
<div class="a" style="left:695px;top:713px;width:1px;height:17px;background:#a5aecb"></div>
<svg style="left:703px;top:714px" width="14" height="15" viewBox="0 0 14 15"><path d="M1 4H8M1 4L3.5 2M1 4L3.5 6M0 10H14M0 13H14" stroke="#aab1cc" stroke-width="1.3" fill="none"/></svg>
<svg style="left:723px;top:714px" width="14" height="15" viewBox="0 0 14 15"><path d="M6 4H13M13 4L10.5 2M13 4L10.5 6M0 10H14M0 13H14" stroke="#aab1cc" stroke-width="1.3" fill="none"/></svg>
<div class="a" style="left:746px;top:713px;width:1px;height:17px;background:#a5aecb"></div>
<svg style="left:754px;top:713px" width="15" height="16" viewBox="0 0 15 16"><path d="M0.5 0.5L5 5M5 0.5L0.5 5" stroke="#d0112b" stroke-width="1.3"/><path d="M7 1.5H14.5M7 4.5H14.5M0 8H14.5M0 11H14.5M0 14H14.5" stroke="#2b2f3a" stroke-width="1.4"/></svg>
<div class="a" style="left:776px;top:713px;width:1px;height:17px;background:#a5aecb"></div>
<svg style="left:783px;top:713px" width="16" height="16" viewBox="0 0 16 16"><text x="0" y="7" font-size="7.5" font-family="Liberation Sans" font-weight="bold" fill="#2b2f3a">ab</text><text x="0" y="14" font-size="7" font-family="Liberation Sans" font-weight="bold" fill="#2b2f3a">c</text><path d="M10 8H14V12.5H6M6 12.5L8.3 10.5M6 12.5L8.3 14.5" fill="none" stroke="#2f6fc2" stroke-width="1.3"/></svg>
<div class="a" style="left:805px;top:713px;width:1px;height:17px;background:#a5aecb"></div>
<svg style="left:813px;top:714px" width="15" height="15" viewBox="0 0 15 15"><circle cx="7.5" cy="7.5" r="6.5" fill="none" stroke="#2b2f3a" stroke-width="1.4"/><path d="M7.5 3.5V7.8H10.8" fill="none" stroke="#2b2f3a" stroke-width="1.3"/></svg>
<svg style="left:1170px;top:738px" width="8" height="5"><path d="M0 5H8L4 0Z" fill="#9a9aa2"/></svg>
<!--CENTEREND-->

<!-- SOLUTION EXPLORER -->
<div class="a" style="left:1193px;top:74px;width:347px;height:21px;background:#40568d"></div>
<div class="a" style="left:1193px;top:95px;width:347px;height:28px;background:#ccd5f0"></div>
<div class="a" style="left:1193px;top:123px;width:347px;height:207px;background:#f6f7fc"></div>
<div class="a" style="left:1193px;top:330px;width:347px;height:19px;background:#5e6a9d"></div>

<!-- PROPERTIES -->
<div class="a" style="left:1193px;top:358px;width:347px;height:21px;background:#f5cc84"></div>
<div class="a" style="left:1193px;top:379px;width:347px;height:23px;background:#f6f7fc"></div>
<div class="a" style="left:1193px;top:402px;width:347px;height:25px;background:#ccd5f0"></div>
<div class="a" style="left:1193px;top:427px;width:347px;height:308px;background:#f6f7fc"></div>
<div class="a" style="left:1193px;top:735px;width:347px;height:8px;background:#dcdde3"></div>

<!--RIGHTSTART--><div class="t" style="left:1196px;top:78px;color:#fff">Solution Explorer</div>
<svg style="left:1490px;top:82px" width="8" height="5"><path d="M0 0H8L4 4.5Z" fill="#c4cdee"/></svg><svg style="left:1507px;top:78px" width="8" height="13" viewBox="0 0 8 13"><path d="M1.5 0.5H6.5M2 0.5V8M6 0.5V8M0 8H8M4 8V12.5" fill="none" stroke="#c4cdee" stroke-width="1.2"/><rect x="2" y="0.5" width="1.6" height="7" fill="#c4cdee"/></svg><svg style="left:1523px;top:80px" width="10" height="9"><path d="M0.5 0.5L9.5 8.5M9.5 0.5L0.5 8.5" stroke="#c4cdee" stroke-width="1.6"/></svg>
<svg style="left:1199px;top:101px" width="17" height="16" viewBox="0 0 17 16"><rect x="7" y="0.7" width="8.3" height="10.6" fill="#ccd5f0" stroke="#2b2f3a" stroke-width="1.3"/><rect x="7" y="0.7" width="8.3" height="2.2" fill="#2b2f3a"/><path d="M9 5H13.5M9 7.2H13.5M9 9.4H13.5" stroke="#2b2f3a" stroke-width="1"/><path d="M0.5 10.5L2.5 9.2L5 11.5L9 8V15.5L5 12.5L2.5 14.8L0.5 13.5Z M1.8 11.2V12.8L3 12Z M7.5 10.5V13.2L5.8 12Z" fill="#8a55d5" fill-rule="evenodd"/></svg>
<div class="a" style="left:1222px;top:99px;width:1px;height:18px;background:#a9b2d2"></div>
<svg style="left:1230px;top:100px" width="15" height="15" viewBox="0 0 15 15"><path d="M0 0H5L2.5 3.5Z" fill="#2d6cc0"/><circle cx="8.5" cy="8.5" r="5.6" fill="none" stroke="#2b2f3a" stroke-width="1.3"/><path d="M8.5 5V8.8H11.3" fill="none" stroke="#2b2f3a" stroke-width="1.2"/></svg>
<svg style="left:1251px;top:106px" width="7" height="4"><path d="M0 0H7L3.5 4Z" fill="#1e1e1e"/></svg>
<svg style="left:1264px;top:104px" width="14" height="10" viewBox="0 0 14 10"><path d="M2 3H13M2 3L4.5 0.8M1 7H12M12 7L9.5 9.2" fill="none" stroke="#2b2f3a" stroke-width="1.1"/></svg>
<svg style="left:1284px;top:101px" width="17" height="15" viewBox="0 0 17 15"><path d="M3 0.7H16.3V12" fill="none" stroke="#2b2f3a" stroke-width="1.2"/><rect x="0.7" y="2.7" width="13" height="11.6" fill="#d6dcee" stroke="#2b2f3a" stroke-width="1.3"/><path d="M3.5 8.5H11" stroke="#2b2f3a" stroke-width="1.4"/></svg>
<svg style="left:1307px;top:101px" width="15" height="15" viewBox="0 0 15 15"><rect x="5" y="0.7" width="9.3" height="10" fill="#d6dcee" stroke="#5a5f6e" stroke-width="1.2"/><rect x="0.7" y="4" width="9.3" height="10.3" fill="#d6dcee" stroke="#5a5f6e" stroke-width="1.2"/></svg>
<div class="a" style="left:1330px;top:99px;width:1px;height:18px;background:#a9b2d2"></div>
<div class="a" style="left:1334px;top:97px;width:22px;height:23px;background:#ffefbb;border:1px solid #e5c365"></div>
<svg style="left:1338px;top:101px" width="14" height="15" viewBox="0 0 14 15"><rect x="0.5" y="0.5" width="3" height="3" fill="#2b2f3a"/><path d="M2 3.5V6H5" fill="none" stroke="#2b2f3a"/><rect x="5" y="4.5" width="4" height="4" fill="none" stroke="#2b2f3a" stroke-width="1.2"/><path d="M7 8.5V10.5H9" fill="none" stroke="#2b2f3a"/><rect x="9" y="9" width="4.5" height="4.5" fill="none" stroke="#2b2f3a" stroke-width="1.2"/></svg>
<svg style="left:1358px;top:106px" width="7" height="4"><path d="M0 0H7L3.5 4Z" fill="#1e1e1e"/></svg>
<div class="a" style="left:1370px;top:99px;width:1px;height:18px;background:#a9b2d2"></div>
<svg style="left:1378px;top:100px" width="15" height="16" viewBox="0 0 15 16"><path d="M1.5 14.5L8 8" stroke="#2b2f3a" stroke-width="2.4" stroke-linecap="round"/><path d="M7 8.5A4.3 4.3 0 0 1 12.5 2.2L10 4.8L11.5 6.3L14 3.8A4.3 4.3 0 0 1 8 9.5Z" fill="#2b2f3a"/></svg>
<div class="a" style="left:1397px;top:97px;width:22px;height:23px;background:#ffefbb;border:1px solid #e5c365"></div>
<svg style="left:1400px;top:103px" width="16" height="11" viewBox="0 0 16 11"><path d="M1 9.5H12L10.5 6.5H3Z" fill="none" stroke="#2b2f3a" stroke-width="1.3"/><path d="M2.5 7.5H10.5" stroke="#2b2f3a"/><g fill="#d4a22e"><rect x="12" y="1" width="1.3" height="1.3"/><rect x="14" y="3" width="1.3" height="1.3"/><rect x="12.5" y="5" width="1.3" height="1.3"/></g></svg>
<div class="a" style="left:1195px;top:123px;width:345px;height:21px;background:#fff;border:1px solid #c8ccdc;border-bottom-color:#9aa0b8"></div>
<div class="t" style="left:1200px;top:127px;color:#717171;font-size:11.8px">Search Solution Explorer (Ctrl+;)</div>
<svg style="left:1512px;top:126px" width="13" height="13" viewBox="0 0 13 13"><circle cx="8.3" cy="4.7" r="3.6" fill="none" stroke="#6b6b6b" stroke-width="1.6"/><path d="M5.7 7.3L1.3 11.7" stroke="#6b6b6b" stroke-width="2.5"/></svg>
<div class="a" style="left:1527px;top:124px;width:1px;height:19px;background:#b8bccc"></div>
<svg style="left:1530px;top:131px" width="7" height="4"><path d="M0 0H7L3.5 4Z" fill="#1e1e1e"/></svg>
<div class="a" style="left:1193px;top:165px;width:347px;height:19px;background:#e6e7ee"></div>
<svg style="left:1208px;top:148px" width="15" height="15" viewBox="0 0 15 15"><rect x="0.7" y="1" width="13" height="12" fill="none" stroke="#6d6d6d" stroke-width="1.2"/><rect x="0.7" y="1" width="13" height="2.5" fill="#6d6d6d"/><path d="M5 8L7.5 6.5L10 9L13.5 6V14L10 11L7.5 13.5L5 12Z M6.3 9V11.5L7.8 10.2Z" fill="#8a55d5" fill-rule="evenodd"/></svg>
<div class="t" style="left:1229px;top:149px;color:#2e2e2e;font-size:11.8px">Solution 'Project_Change_Colors' (1 of 1 project)</div>
<svg style="left:1203px;top:172px" width="7" height="7"><path d="M6.5 0.5V6.5H0.5Z" fill="#1e1e1e"/></svg>
<svg style="left:1226px;top:168px" width="15" height="15" viewBox="0 0 15 15"><rect x="0.7" y="0.7" width="13" height="12.6" rx="1" fill="#e8ecf6" stroke="#6d6d6d" stroke-width="1.3"/><text x="7" y="10" font-size="7.5" font-family="Liberation Sans" text-anchor="middle" fill="#2d6cc0">VB</text></svg>
<div class="t" style="left:1246px;top:168px;color:#2e2e2e;font-weight:bold;font-size:11px">Project_Change_Colors</div>
<svg style="left:1223px;top:189px" width="6" height="10"><path d="M0.7 0.7L5.3 5L0.7 9.3Z" fill="none" stroke="#1e1e1e" stroke-width="1.2"/></svg>
<svg style="left:1243px;top:187px" width="18" height="15" viewBox="0 0 18 15"><path d="M1 8H5V13H1Z M8 3H15V8H8Z M5 10.5H8V8" fill="none" stroke="#3c3c3c" stroke-width="1.3"/><rect x="9" y="9" width="5" height="4" fill="none" stroke="#3c3c3c" stroke-width="1.2"/></svg>
<div class="t" style="left:1265px;top:188px;color:#2e2e2e;">Dependencies</div>
<svg style="left:1243px;top:207px" width="18" height="15" viewBox="0 0 18 15"><path d="M2 1H7L8.5 3H15V12H2Z" fill="#d5ac55"/><path d="M2 4H15V12H2Z" fill="#e4c073"/><path d="M1 14L5.5 9.5M4 9A2 2 0 1 1 7 11" stroke="#3c3c3c" stroke-width="1.8" fill="none"/></svg>
<div class="t" style="left:1265px;top:207px;color:#2e2e2e;">My Project</div>
<svg style="left:1223px;top:228px" width="6" height="10"><path d="M0.7 0.7L5.3 5L0.7 9.3Z" fill="none" stroke="#1e1e1e" stroke-width="1.2"/></svg>
<svg style="left:1244px;top:226px" width="18" height="15" viewBox="0 0 18 15"><text x="0" y="11" font-size="11" font-family="Liberation Sans" font-weight="bold" fill="#3a7dd0">VB</text></svg>
<div class="t" style="left:1265px;top:226px;color:#2e2e2e;">ApplicationEvents.vb</div>
<svg style="left:1222px;top:249px" width="7" height="7"><path d="M6.5 0.5V6.5H0.5Z" fill="#1e1e1e"/></svg>
<svg style="left:1244px;top:245px" width="15" height="15" viewBox="0 0 15 15"><rect x="0.7" y="0.7" width="13" height="12.6" fill="#fff" stroke="#6d6d6d" stroke-width="1.2"/><rect x="0.7" y="0.7" width="13" height="2.5" fill="#6d6d6d"/><rect x="3" y="6" width="4" height="4" fill="#fff" stroke="#8a55d5"/><rect x="8" y="6" width="4" height="4" fill="#8a55d5"/></svg>
<div class="t" style="left:1265px;top:246px;color:#2e2e2e;">Form1.vb</div>
<svg style="left:1240px;top:267px" width="6" height="10"><path d="M0.7 0.7L5.3 5L0.7 9.3Z" fill="none" stroke="#1e1e1e" stroke-width="1.2"/></svg>
<svg style="left:1262px;top:265px" width="18" height="15" viewBox="0 0 18 15"><text x="0" y="11" font-size="11" font-family="Liberation Sans" font-weight="bold" fill="#3a7dd0">VB</text></svg>
<div class="t" style="left:1282px;top:265px;color:#2e2e2e;font-size:11.7px">Form1.Designer.vb</div>
<svg style="left:1263px;top:284px" width="15" height="15" viewBox="0 0 15 15"><path d="M4 3V0.7H10L13 3.7V12H10" fill="none" stroke="#3c3c3c" stroke-width="1.2"/><path d="M0.7 3.5H7L10 6.5V14.3H0.7Z" fill="#fff" stroke="#3c3c3c" stroke-width="1.2"/></svg>
<div class="t" style="left:1282px;top:284px;color:#2e2e2e;">Form1.resx</div>
<div class="a" style="left:1193px;top:330px;width:101px;height:19px;background:#fdfdfe"></div>
<div class="t" style="left:1198px;top:334px;color:#2e2e2e">Solution Explorer</div>
<div class="a" style="left:1295px;top:330px;width:74px;height:19px;background:#40568d"></div>
<div class="t" style="left:1300px;top:334px;color:#d3ddf7;font-size:11.5px">Git Changes</div>
<div class="t" style="left:1196px;top:362px;color:#44381f">Properties</div>
<svg style="left:1490px;top:366px" width="8" height="5"><path d="M0 0H8L4 4.5Z" fill="#5c4a2a"/></svg><svg style="left:1507px;top:362px" width="8" height="13" viewBox="0 0 8 13"><path d="M1.5 0.5H6.5M2 0.5V8M6 0.5V8M0 8H8M4 8V12.5" fill="none" stroke="#5c4a2a" stroke-width="1.2"/><rect x="2" y="0.5" width="1.6" height="7" fill="#5c4a2a"/></svg><svg style="left:1523px;top:364px" width="10" height="9"><path d="M0.5 0.5L9.5 8.5M9.5 0.5L0.5 8.5" stroke="#5c4a2a" stroke-width="1.6"/></svg>
<div class="a" style="left:1193px;top:379px;width:347px;height:23px;background:#f2f4fa"></div>
<div class="t" style="left:1200px;top:385px;font-weight:bold;color:#2e2e2e">Button1</div>
<div class="t" style="left:1253px;top:385px;color:#2b2b2b;font-size:11.5px">System.Windows.Forms.Button</div>
<svg style="left:1529px;top:390px" width="6" height="3"><path d="M0 0H6L3 3Z" fill="#1e1e1e"/></svg>
<div class="a" style="left:1193px;top:402px;width:347px;height:25px;background:#ccd5f0"></div>
<div class="a" style="left:1195px;top:403px;width:24px;height:23px;background:#ffefc8;border:1px solid #9c8a58"></div>
<svg style="left:1200px;top:407px" width="14" height="15" viewBox="0 0 14 15"><rect x="0.5" y="1.5" width="3" height="3" fill="none" stroke="#2b2f3a"/><rect x="0.5" y="9.5" width="3" height="3" fill="none" stroke="#2b2f3a"/><path d="M5 1H13M6 3.5H13M6 6H13M6 8.5H13M5 11H13M6 13.5H13" stroke="#2b2f3a" stroke-width="1.1"/></svg>
<svg style="left:1223px;top:407px" width="16" height="15" viewBox="0 0 16 15"><rect x="0" y="0" width="7" height="6.5" fill="#3b3f4a"/><text x="3.5" y="5.6" font-size="6" font-family="Liberation Sans" font-weight="bold" text-anchor="middle" fill="#ccd5f0">A</text><text x="3.5" y="14" font-size="7" font-family="Liberation Sans" font-weight="bold" text-anchor="middle" fill="#3b3f4a">Z</text><path d="M12 2V12M9 9L12 12.5L15 9" fill="none" stroke="#1f6fc8" stroke-width="2"/></svg>
<div class="a" style="left:1244px;top:405px;width:1px;height:19px;background:#a9b2d2"></div>
<div class="a" style="left:1247px;top:403px;width:23px;height:23px;background:#ffefc8;border:1px solid #9c8a58"></div>
<svg style="left:1251px;top:407px" width="15" height="15" viewBox="0 0 15 15"><path d="M4.5 1H10.5L13.5 4V13.5H4.5Z" fill="#d8dcea" stroke="#2b2f3a" stroke-width="1.2"/><path d="M10.5 1V4H13.5" fill="none" stroke="#2b2f3a"/><path d="M3.5 14V9" stroke="#1e1e1e" stroke-width="2"/><path d="M1 5V7A2.5 2.5 0 0 0 6 7V5" fill="none" stroke="#1e1e1e" stroke-width="1.6"/></svg>
<svg style="left:1275px;top:407px" width="13" height="15" viewBox="0 0 13 15"><path d="M6 0.5H12L8 6H11.5L3 14.5L5.5 8H1.5Z" fill="#d8861d"/></svg>
<div class="a" style="left:1296px;top:405px;width:1px;height:19px;background:#a9b2d2"></div>
<svg style="left:1302px;top:407px" width="15" height="15" viewBox="0 0 15 15"><path d="M1.5 13.5L7.5 7.5" stroke="#9fa6bd" stroke-width="2.4" stroke-linecap="round"/><path d="M6.5 8A4.3 4.3 0 0 1 12.5 1.7L10 4.3L11.5 5.8L14 3.3A4.3 4.3 0 0 1 7.5 9Z" fill="#9fa6bd"/></svg>
<div class="a" style="left:1193px;top:427px;width:347px;height:308px;background:#f6f7fc;overflow:hidden">
<div class="a" style="left:2px;top:0;width:13px;height:308px;background:#eef0f5"></div>
<div class="a" style="left:15px;top:20px;width:315px;height:1px;background:#f0f1f6"></div>
<div class="t" style="left:18px;top:5px;width:125px;overflow:hidden;color:#2e2e2e;">ImageAlign</div>
<div class="t" style="left:147px;top:5px;color:#2e2e2e;">MiddleCenter</div>
<div class="a" style="left:15px;top:39px;width:315px;height:1px;background:#f0f1f6"></div>
<div class="t" style="left:18px;top:23px;width:125px;overflow:hidden;color:#2e2e2e;">ImageIndex</div>
<div class="a" style="left:145px;top:21px;width:20px;height:17px;background:#fff;border:1px solid #3c3c3c"></div>
<div class="t" style="left:173px;top:23px;color:#2e2e2e;">(none)</div>
<div class="a" style="left:15px;top:57px;width:315px;height:1px;background:#f0f1f6"></div>
<div class="t" style="left:18px;top:42px;width:125px;overflow:hidden;color:#2e2e2e;">ImageKey</div>
<div class="a" style="left:145px;top:40px;width:20px;height:17px;background:#fff;border:1px solid #3c3c3c"></div>
<div class="t" style="left:173px;top:42px;color:#2e2e2e;">(none)</div>
<div class="a" style="left:15px;top:76px;width:315px;height:1px;background:#f0f1f6"></div>
<div class="t" style="left:18px;top:60px;width:125px;overflow:hidden;color:#2e2e2e;">ImageList</div>
<div class="t" style="left:147px;top:60px;color:#2e2e2e;">(none)</div>
<div class="a" style="left:15px;top:94px;width:315px;height:1px;background:#f0f1f6"></div>
<div class="t" style="left:18px;top:79px;width:125px;overflow:hidden;color:#2e2e2e;">RightToLeft</div>
<div class="t" style="left:147px;top:79px;color:#2e2e2e;">No</div>
<div class="a" style="left:15px;top:112px;width:315px;height:1px;background:#f0f1f6"></div>
<div class="a" style="left:14px;top:94px;width:130px;height:18px;background:#0078d7"></div>
<div class="t" style="left:18px;top:97px;color:#fff">Text</div>
<div class="t" style="left:147px;top:97px;color:#000;font-weight:bold">Red</div>
<div class="a" style="left:169px;top:95px;width:1px;height:15px;background:#000"></div>
<div class="a" style="left:313px;top:95px;width:17px;height:17px;background:#f0f0f2;border:1px solid #b8b8c0"></div>
<svg style="left:318px;top:101px" width="8" height="5"><path d="M0.5 0.5L4 4L7.5 0.5" fill="none" stroke="#555"/></svg>
<svg style="left:229px;top:95px" width="8" height="16"><path d="M1 0.5H3L4 1.5L5 0.5H7M4 1.5V14.5M1 15.5H3L4 14.5L5 15.5H7" fill="none" stroke="#1e1e1e"/></svg>
<div class="a" style="left:15px;top:131px;width:315px;height:1px;background:#f0f1f6"></div>
<div class="t" style="left:18px;top:116px;width:125px;overflow:hidden;color:#2e2e2e;">TextAlign</div>
<div class="t" style="left:147px;top:116px;color:#2e2e2e;">MiddleCenter</div>
<div class="a" style="left:15px;top:149px;width:315px;height:1px;background:#f0f1f6"></div>
<div class="t" style="left:18px;top:134px;width:125px;overflow:hidden;color:#2e2e2e;">TextImageRelation</div>
<div class="t" style="left:147px;top:134px;color:#2e2e2e;">Overlay</div>
<div class="a" style="left:15px;top:168px;width:315px;height:1px;background:#f0f1f6"></div>
<div class="t" style="left:18px;top:153px;width:125px;overflow:hidden;color:#2e2e2e;">UseMnemonic</div>
<div class="t" style="left:147px;top:153px;color:#2e2e2e;">True</div>
<div class="a" style="left:15px;top:186px;width:315px;height:1px;background:#f0f1f6"></div>
<div class="t" style="left:18px;top:171px;width:125px;overflow:hidden;color:#2e2e2e;font-size:11.4px;">UseVisualStyleBackColo</div>
<div class="t" style="left:147px;top:171px;color:#2e2e2e;font-weight:bold;">True</div>
<div class="a" style="left:15px;top:205px;width:315px;height:1px;background:#f0f1f6"></div>
<div class="t" style="left:18px;top:190px;width:125px;overflow:hidden;color:#2e2e2e;">UseWaitCursor</div>
<div class="t" style="left:147px;top:190px;color:#2e2e2e;">False</div>
<div class="a" style="left:0;top:205px;width:330px;height:19px;background:#eeeff4"></div>
<svg style="left:4px;top:209px" width="10" height="10"><rect x="0.5" y="0.5" width="9" height="9" fill="#fff" stroke="#3c3c3c"/><path d="M2.5 5H7.5" stroke="#1e1e1e"/></svg>
<div class="t" style="left:18px;top:208px;font-weight:bold;color:#2e2e2e">Behavior</div>
<div class="a" style="left:15px;top:242px;width:315px;height:1px;background:#f0f1f6"></div>
<div class="t" style="left:18px;top:226px;width:125px;overflow:hidden;color:#2e2e2e;">AllowDrop</div>
<div class="t" style="left:147px;top:226px;color:#2e2e2e;">False</div>
<div class="a" style="left:15px;top:260px;width:315px;height:1px;background:#f0f1f6"></div>
<div class="t" style="left:18px;top:245px;width:125px;overflow:hidden;color:#2e2e2e;">AutoEllipsis</div>
<div class="t" style="left:147px;top:245px;color:#2e2e2e;">False</div>
<div class="a" style="left:15px;top:279px;width:315px;height:1px;background:#f0f1f6"></div>
<div class="t" style="left:18px;top:263px;width:125px;overflow:hidden;color:#2e2e2e;">ContextMenuStrip</div>
<div class="t" style="left:147px;top:263px;color:#2e2e2e;">(none)</div>
<div class="a" style="left:15px;top:297px;width:315px;height:1px;background:#f0f1f6"></div>
<div class="t" style="left:18px;top:282px;width:125px;overflow:hidden;color:#2e2e2e;">DialogResult</div>
<div class="t" style="left:147px;top:282px;color:#2e2e2e;">None</div>
<div class="a" style="left:15px;top:316px;width:315px;height:1px;background:#f0f1f6"></div>
<div class="t" style="left:18px;top:300px;width:125px;overflow:hidden;color:#2e2e2e;">Enabled</div>
<div class="t" style="left:147px;top:300px;color:#2e2e2e;">True</div>
<div class="a" style="left:143px;top:0;width:1px;height:308px;background:#eff0f5"></div>
<div class="a" style="left:330px;top:0;width:17px;height:308px;background:#eeeff3"></div>
<svg style="left:334px;top:6px" width="9" height="5"><path d="M0 5H9L4.5 0Z" fill="#868999"/></svg>
<div class="a" style="left:334px;top:87px;width:9px;height:77px;background:#c2c3c9"></div>
<svg style="left:334px;top:298px" width="9" height="5"><path d="M0 0H9L4.5 5Z" fill="#868999"/></svg>
</div><!--RIGHTEND-->
</body></html>
